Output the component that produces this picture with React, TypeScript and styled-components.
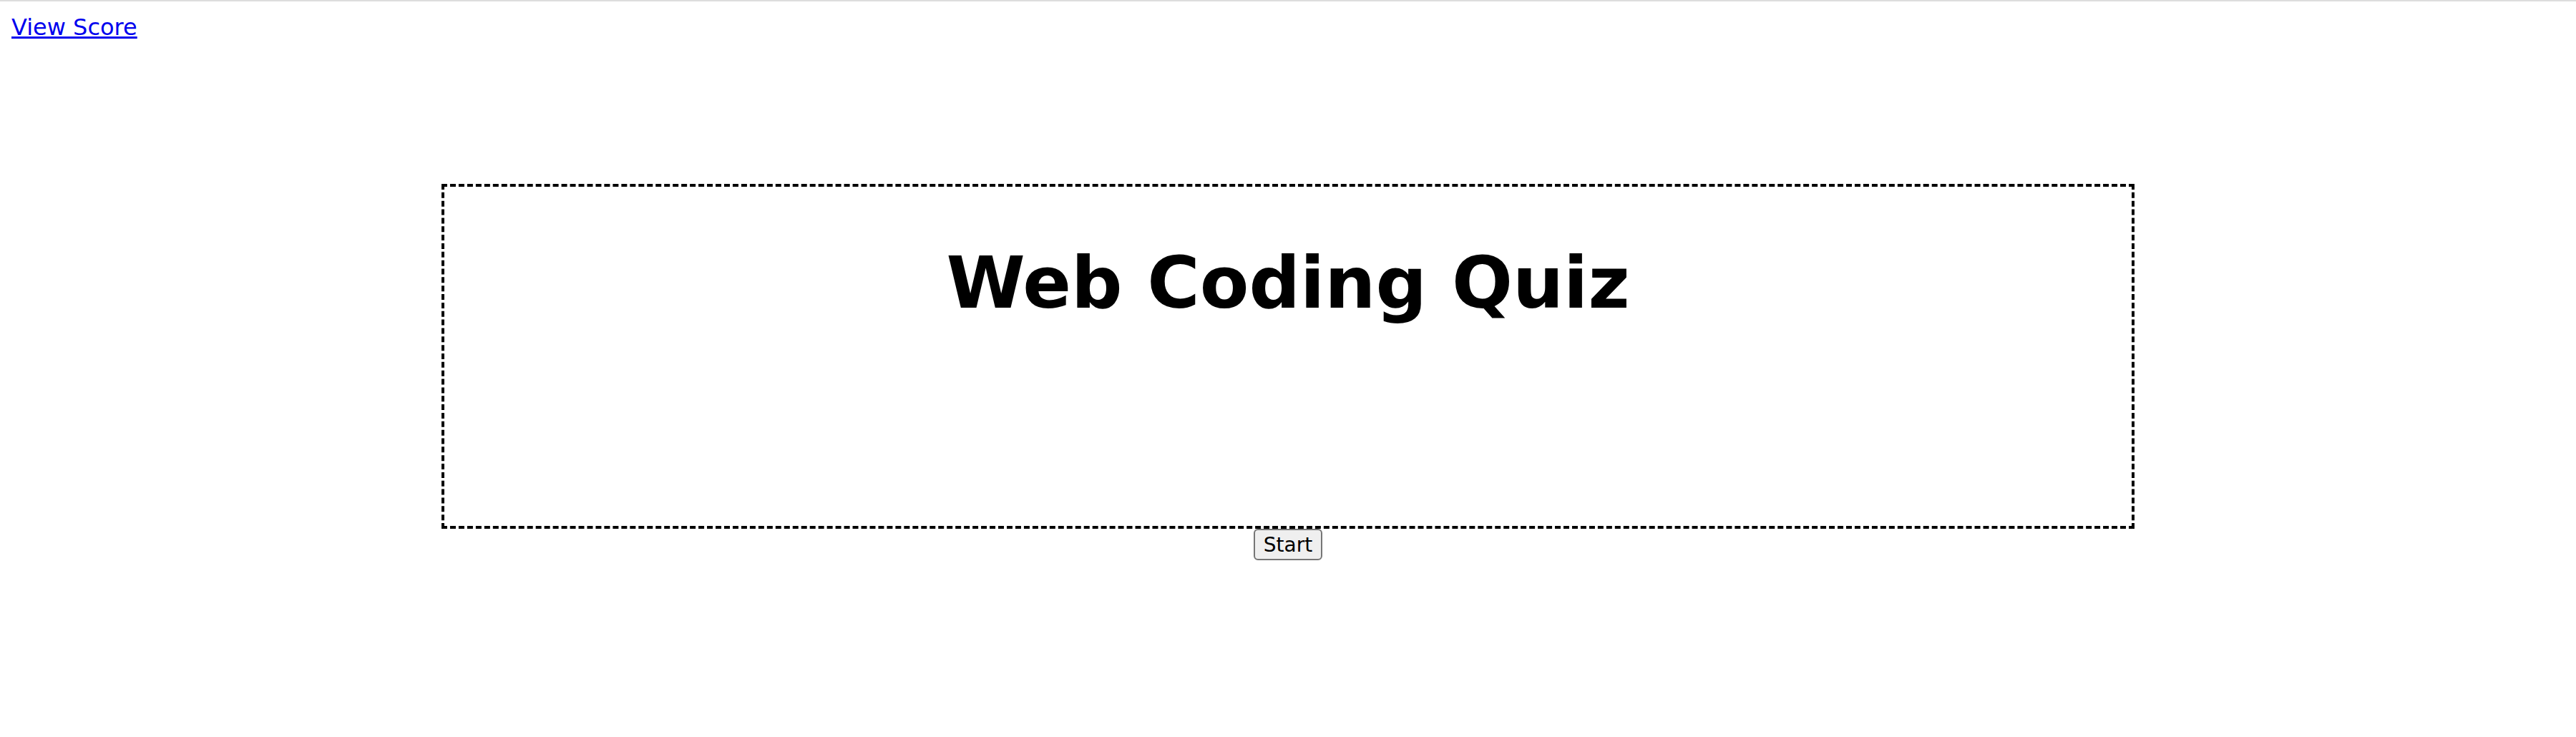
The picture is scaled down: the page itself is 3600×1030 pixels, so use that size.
import React from "react";
import styled, { createGlobalStyle } from "styled-components";

const GlobalStyle = createGlobalStyle`
  html, body {
    margin: 0;
    padding: 0;
    background: #ffffff;
  }
  body {
    font-family: Verdana, "DejaVu Sans", sans-serif;
    border-top: 2px solid #dddddd;
  }
`;

const Header = styled.header`
  padding: 18px 16px 0;
  line-height: 37px;
  height: 37px;
`;

const ScoreLink = styled.a`
  font-size: 32px;
  color: #0000ee;
  text-decoration: underline;
  cursor: pointer;
`;

const QuizBox = styled.main`
  width: 2358px;
  height: 474px;
  margin: 200px auto 0;
  border: 4px dashed #000000;
`;

const Title = styled.h1`
  margin: 76px 0 0;
  font-size: 100px;
  font-weight: bold;
  text-align: center;
  color: #000000;
  line-height: normal;
`;

const Controls = styled.div`
  display: flex;
  justify-content: center;
`;

const StartButton = styled.button`
  font-family: Verdana, "DejaVu Sans", sans-serif;
  font-size: 28px;
  color: #000000;
  background: #efefef;
  border: 2px solid #767676;
  border-radius: 6px;
  padding: 0;
  width: 96px;
  height: 44px;
  cursor: pointer;
`;

export default function App() {
  return (
    <>
      <GlobalStyle />
      <Header>
        <ScoreLink href="#">View Score</ScoreLink>
      </Header>
      <QuizBox>
        <Title>Web Coding Quiz</Title>
      </QuizBox>
      <Controls>
        <StartButton>Start</StartButton>
      </Controls>
    </>
  );
}
